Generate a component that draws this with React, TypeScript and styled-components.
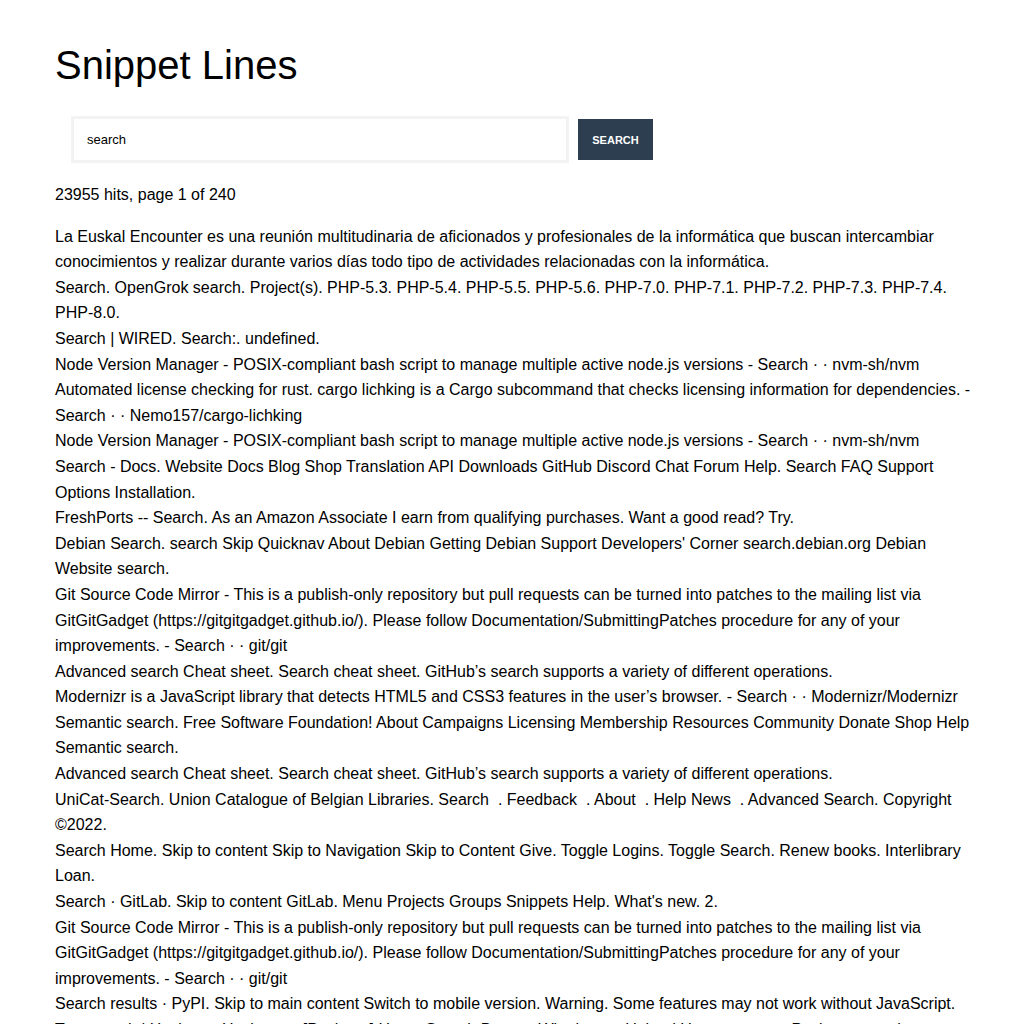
import React from "react";
import styled, { createGlobalStyle } from "styled-components";

const GlobalStyle = createGlobalStyle`
  html, body {
    margin: 0;
    padding: 0;
    background: #ffffff;
  }
  body {
    font-family: "Liberation Sans", Arial, Helvetica, sans-serif;
    color: #000000;
  }
  * { box-sizing: border-box; }
`;

const Page = styled.main`
  padding: 42px 45px 0 55px;
`;

const Title = styled.h1`
  margin: 0;
  font-size: 40px;
  font-weight: 400;
  line-height: 46px;
`;

const SearchForm = styled.form`
  display: flex;
  align-items: center;
  gap: 9px;
  margin: 28px 0 0 16px;
`;

const SearchInput = styled.input`
  width: 498px;
  height: 47px;
  border: 3px solid #f3f3f3;
  padding: 0 13px;
  font-family: "Liberation Sans", Arial, sans-serif;
  font-size: 13px;
  color: #000;
  background: #fff;
  outline: none;
`;

const SearchButton = styled.button`
  width: 75px;
  height: 41px;
  border: none;
  background: #2c3e50;
  color: #ffffff;
  font-family: "Liberation Sans", Arial, sans-serif;
  font-size: 11px;
  font-weight: 700;
  padding: 0;
  cursor: pointer;
`;

const Hits = styled.p`
  margin: 19px 0 16px;
  font-size: 16px;
  line-height: 1.6;
`;

const Results = styled.div`
  display: flex;
  flex-direction: column;
`;

const Snippet = styled.div`
  font-size: 16px;
  line-height: 1.6;
`;

const snippets = [
  "La Euskal Encounter es una reunión multitudinaria de aficionados y profesionales de la informática que buscan intercambiar conocimientos y realizar durante varios días todo tipo de actividades relacionadas con la informática.",
  "Search. OpenGrok search. Project(s). PHP-5.3. PHP-5.4. PHP-5.5. PHP-5.6. PHP-7.0. PHP-7.1. PHP-7.2. PHP-7.3. PHP-7.4. PHP-8.0.",
  "Search | WIRED. Search:. undefined.",
  "Node Version Manager - POSIX-compliant bash script to manage multiple active node.js versions - Search · · nvm-sh/nvm",
  "Automated license checking for rust. cargo lichking is a Cargo subcommand that checks licensing information for dependencies. - Search · · Nemo157/cargo-lichking",
  "Node Version Manager - POSIX-compliant bash script to manage multiple active node.js versions - Search · · nvm-sh/nvm",
  "Search - Docs. Website Docs Blog Shop Translation API Downloads GitHub Discord Chat Forum Help. Search FAQ Support Options Installation.",
  "FreshPorts -- Search. As an Amazon Associate I earn from qualifying purchases. Want a good read? Try.",
  "Debian Search. search Skip Quicknav About Debian Getting Debian Support Developers' Corner search.debian.org Debian Website search.",
  "Git Source Code Mirror - This is a publish-only repository but pull requests can be turned into patches to the mailing list via GitGitGadget (https://gitgitgadget.github.io/). Please follow Documentation/SubmittingPatches procedure for any of your improvements. - Search · · git/git",
  "Advanced search Cheat sheet. Search cheat sheet. GitHub’s search supports a variety of different operations.",
  "Modernizr is a JavaScript library that detects HTML5 and CSS3 features in the user’s browser. - Search · · Modernizr/Modernizr",
  "Semantic search. Free Software Foundation! About Campaigns Licensing Membership Resources Community Donate Shop Help Semantic search.",
  "Advanced search Cheat sheet. Search cheat sheet. GitHub’s search supports a variety of different operations.",
  "UniCat-Search. Union Catalogue of Belgian Libraries. Search \u00a0. Feedback \u00a0. About \u00a0. Help News \u00a0. Advanced Search. Copyright ©2022.",
  "Search Home. Skip to content Skip to Navigation Skip to Content Give. Toggle Logins. Toggle Search. Renew books. Interlibrary Loan.",
  "Search · GitLab. Skip to content GitLab. Menu Projects Groups Snippets Help. What's new. 2.",
  "Git Source Code Mirror - This is a publish-only repository but pull requests can be turned into patches to the mailing list via GitGitGadget (https://gitgitgadget.github.io/). Please follow Documentation/SubmittingPatches procedure for any of your improvements. - Search · · git/git",
  "Search results · PyPI. Skip to main content Switch to mobile version. Warning. Some features may not work without JavaScript.",
  "Text search | Hackage. Hackage :: [Package] Home Search Browse What's new Upload User accounts. Package search.",
];

export default function App() {
  return (
    <>
      <GlobalStyle />
      <Page>
        <Title>Snippet Lines</Title>
        <SearchForm onSubmit={(e) => e.preventDefault()}>
          <SearchInput type="text" defaultValue="search" />
          <SearchButton type="submit">SEARCH</SearchButton>
        </SearchForm>
        <Hits>23955 hits, page 1 of 240</Hits>
        <Results>
          {snippets.map((s, i) => (
            <Snippet key={i}>{s}</Snippet>
          ))}
        </Results>
      </Page>
    </>
  );
}
